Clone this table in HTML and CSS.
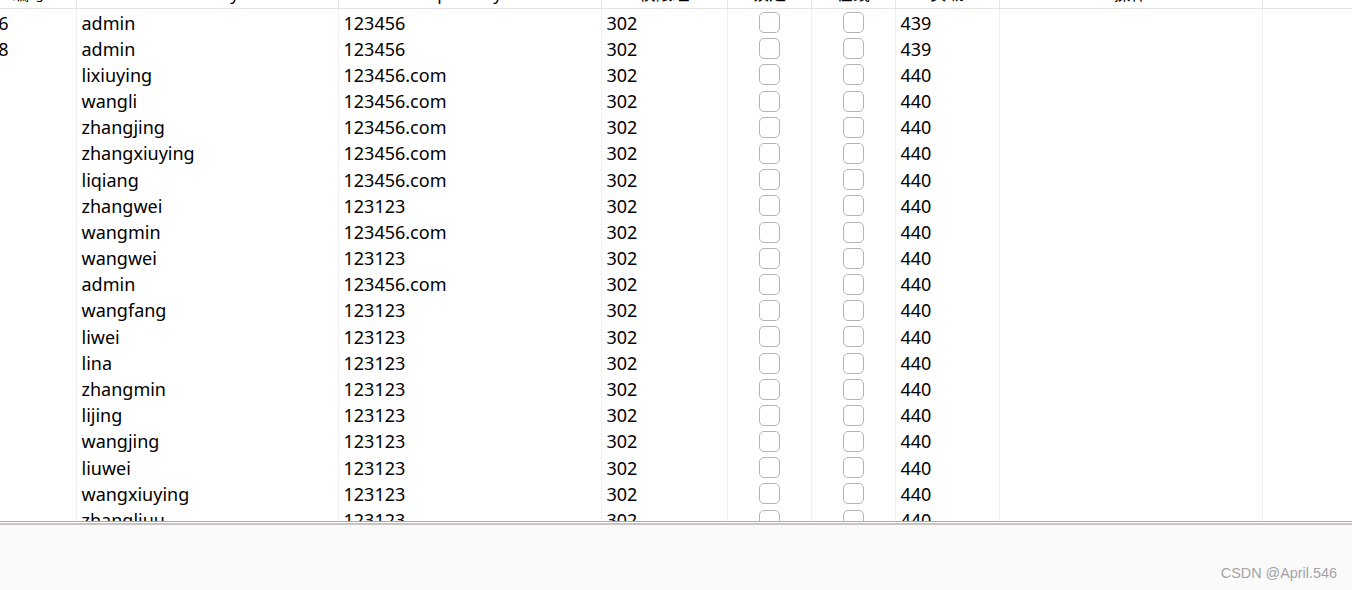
FILE: index.html
```html
<!DOCTYPE html>
<html lang="zh-CN">
<head>
    <meta charset="UTF-8">
    <title>用户列表</title>
    <link rel="stylesheet" href="styles.css">
</head>
<body>
    <div class="grid-view">
        <table class="grid">
            <colgroup>
                <col class="c-id">
                <col class="c-name">
                <col class="c-pass">
                <col class="c-group">
                <col class="c-check">
                <col class="c-check">
                <col class="c-num">
                <col class="c-op">
                <col class="c-rest">
            </colgroup>
            <thead>
                <tr>
                    <th>编号</th>
                    <th>userKey</th>
                    <th>passKey</th>
                    <th>权限组</th>
                    <th>锁定</th>
                    <th>在线</th>
                    <th>负载</th>
                    <th>操作</th>
                    <th></th>
                </tr>
            </thead>
            <tbody id="rows"></tbody>
        </table>
    </div>
    <div class="statusbar">
        <span class="watermark">CSDN @April.546</span>
    </div>

    <script>
        const users = [
            ["26", "admin", "123456", 439],
            ["28", "admin", "123456", 439],
            ["", "lixiuying", "123456.com", 440],
            ["", "wangli", "123456.com", 440],
            ["", "zhangjing", "123456.com", 440],
            ["", "zhangxiuying", "123456.com", 440],
            ["", "liqiang", "123456.com", 440],
            ["", "zhangwei", "123123", 440],
            ["", "wangmin", "123456.com", 440],
            ["", "wangwei", "123123", 440],
            ["", "admin", "123456.com", 440],
            ["", "wangfang", "123123", 440],
            ["", "liwei", "123123", 440],
            ["", "lina", "123123", 440],
            ["", "zhangmin", "123123", 440],
            ["", "lijing", "123123", 440],
            ["", "wangjing", "123123", 440],
            ["", "liuwei", "123123", 440],
            ["", "wangxiuying", "123123", 440],
            ["", "zhangliuu", "123123", 440]
        ];

        document.getElementById("rows").innerHTML = users
            .map(u => `
                <tr>
                    <td>${u[0]}</td>
                    <td>${u[1]}</td>
                    <td>${u[2]}</td>
                    <td>302</td>
                    <td class="center"><span class="box"></span></td>
                    <td class="center"><span class="box"></span></td>
                    <td>${u[3]}</td>
                    <td></td>
                    <td></td>
                </tr>
            `)
            .join("");
    </script>
</body>
</html>
```

FILE: styles.css
```css
*{
    box-sizing: border-box;
    margin: 0;
    padding: 0;
}
html, body {
    height: 100%;
    overflow: hidden;
}
body {
    font-family: "Noto Sans", "Noto Sans CJK SC", sans-serif;
    background: #fff;
    color: #000;
    display: flex;
    flex-direction: column;
}
.grid-view {
    height: 522px;
    overflow: hidden;
    border-bottom: 1px solid #8db1da;
    flex-shrink: 0;
}
.grid {
    table-layout: fixed;
    border-collapse: collapse;
    width: 1450px;
    margin-left: -17px;
    margin-top: -22px;
    font-size: 18px;
}
.c-id { width: 93px; }
.c-name { width: 262px; }
.c-pass { width: 263px; }
.c-group { width: 126px; }
.c-check { width: 84px; }
.c-num { width: 104px; }
.c-op { width: 263px; }
.c-rest { width: 189px; }

.grid th {
    height: 30px;
    font-weight: normal;
    font-size: 17px;
    text-align: center;
    vertical-align: bottom;
    line-height: 20px;
    padding-bottom: 4px;
    border-right: 1px solid #e4e4e4;
    border-bottom: 1px solid #e2e2e2;
    white-space: nowrap;
    overflow: hidden;
}
.grid td {
    height: 26.2px;
    padding: 2px 5px 0;
    line-height: 24px;
    border-right: 1px solid #f0f0f0;
    white-space: nowrap;
    overflow: hidden;
}
.grid td.center {
    text-align: center;
}
.box {
    display: inline-block;
    width: 21px;
    height: 21px;
    border: 1.5px solid #b4b4b4;
    border-radius: 5px;
    vertical-align: middle;
    margin-top: -4px;
}
.statusbar {
    flex: 1;
    margin-top: 1px;
    border-top: 2px solid #c9c3c3;
    background: #fafafa;
    display: flex;
    justify-content: flex-end;
    align-items: flex-end;
    padding: 0 15px 9px 0;
}
.watermark {
    font-family: "Liberation Sans", Arial, sans-serif;
    font-size: 14.4px;
    color: #a3a3a3;
}
```
